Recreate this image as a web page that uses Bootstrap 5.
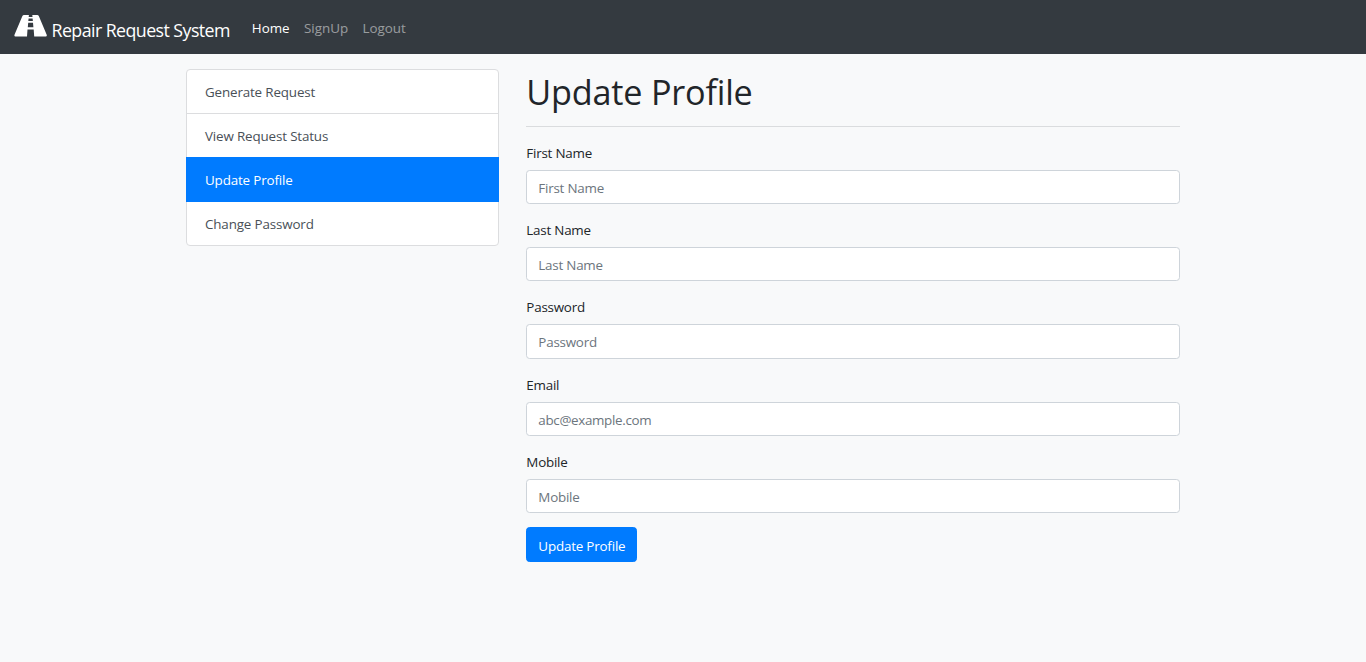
<!DOCTYPE html>
<html lang="en">
<head>
<meta charset="utf-8">
<meta name="viewport" content="width=device-width, initial-scale=1">
<title>Repair Request System</title>
<link rel="stylesheet" href="https://cdn.jsdelivr.net/npm/bootstrap@5.3.0/dist/css/bootstrap.min.css">
<style>
:root { font-size: 14.35px; }
body { font-family: "Segoe UI", "Open Sans", "Noto Sans", sans-serif; font-size: 13.4px; line-height: 21.5px; background: #f8f9fa; color: #212529; }
.topbar { background: #343a40; height: 54px; padding: 0 14px; }
.topbar .navbar-brand { font-size: 17.8px; letter-spacing: -.56px; line-height: 27px; color: #fff; padding: 0; margin: 0 14.7px 0 0; }
.topbar .navbar-brand svg { width: 33px; height: 22px; margin: -2px 4.5px 0 0; fill: #fff; }
.brand-label { padding-top: 7px; }
.topbar .nav-link { padding: 9px 7.1px 6px; color: rgba(255,255,255,.5); }
.topbar .nav-link.active { color: #fff; }
.page { max-width: 1021px; padding: 0 13.5px; margin-top: 15px; }
.page > .row { --bs-gutter-x: 27px; }
.side-menu { --bs-list-group-border-color: #dcdddf; --bs-list-group-border-radius: 4px; letter-spacing: -.15px; }
.side-menu .list-group-item { padding: 11px 18px; height: 45px; line-height: 22px; color: #495057; margin-top: -1px; border-width: 1px; }
.side-menu .list-group-item:first-child { margin-top: 0; }
.side-menu .list-group-item.active { background: #007bff; border-color: #007bff; color: #fff; margin-top: -1px; }
h1 { font-size: 34.2px; font-weight: 400; letter-spacing: -.2px; line-height: 43px; margin: 1px 0 12.8px; }
hr { margin: 0 0 14.4px; border-top: 1px solid #dadcde; opacity: 1; }
.field { margin-bottom: 14.35px; }
.form-label { display: block; padding-top: 1.7px; margin: 0 0 5.5px; line-height: 21.5px; letter-spacing: -.22px; }
.form-control { height: 34.2px; padding: 6px 11px 4px; font-size: 13.4px; letter-spacing: -.22px; line-height: 22px; border: 1px solid #ced4da; border-radius: 3.6px; }
.form-control::placeholder { color: #6c757d; }
#email { letter-spacing: -.33px; }
.btn-primary { --bs-btn-bg: #007bff; --bs-btn-border-color: #007bff; height: 35px; padding: 7px 11px 3px; font-size: 13.4px; letter-spacing: -.19px; line-height: 23px; border-radius: 3.6px; }
</style>
</head>
<body>
<nav class="navbar navbar-expand topbar">
  <a class="navbar-brand d-flex align-items-center" href="#">
    <svg viewBox="0 0 33 22" aria-hidden="true"><path fill-rule="evenodd" d="M10 0H14.9L14.7 2H18.5L18.3 0H23.2Q24.3 0 24.8 1L32.7 19.8Q33.2 21.6 31.8 21.6H20.2L19.7 14.4H13.5L13 21.6H1.4Q0 21.6 .5 19.8L8.4 1Q8.9 0 10 0ZM14.6 3.4L14.3 6.1H18.9L18.6 3.4ZM14.2 7.7L13.8 12.3H19.4L19 7.7Z"/></svg>
    <span class="brand-label">Repair Request System</span>
  </a>
  <ul class="navbar-nav">
    <li class="nav-item"><a class="nav-link active" href="#">Home</a></li>
    <li class="nav-item"><a class="nav-link" href="#">SignUp</a></li>
    <li class="nav-item"><a class="nav-link" href="#">Logout</a></li>
  </ul>
</nav>
<main class="container page">
  <div class="row">
    <div class="col-4">
      <div class="list-group side-menu">
        <a href="#" class="list-group-item list-group-item-action">Generate Request</a>
        <a href="#" class="list-group-item list-group-item-action">View Request Status</a>
        <a href="#" class="list-group-item list-group-item-action active">Update Profile</a>
        <a href="#" class="list-group-item list-group-item-action">Change Password</a>
      </div>
    </div>
    <div class="col-8">
      <h1>Update Profile</h1>
      <hr>
      <form>
        <div class="field"><label class="form-label" for="first">First Name</label><input class="form-control" id="first" type="text" placeholder="First Name"></div>
        <div class="field"><label class="form-label" for="last">Last Name</label><input class="form-control" id="last" type="text" placeholder="Last Name"></div>
        <div class="field"><label class="form-label" for="pass">Password</label><input class="form-control" id="pass" type="password" placeholder="Password"></div>
        <div class="field"><label class="form-label" for="email">Email</label><input class="form-control" id="email" type="email" placeholder="abc@example.com"></div>
        <div class="field"><label class="form-label" for="mobile">Mobile</label><input class="form-control" id="mobile" type="text" placeholder="Mobile"></div>
        <button type="button" class="btn btn-primary">Update Profile</button>
      </form>
    </div>
  </div>
</main>
<script src="https://cdn.jsdelivr.net/npm/bootstrap@5.3.0/dist/js/bootstrap.bundle.min.js"></script>
</body>
</html>
